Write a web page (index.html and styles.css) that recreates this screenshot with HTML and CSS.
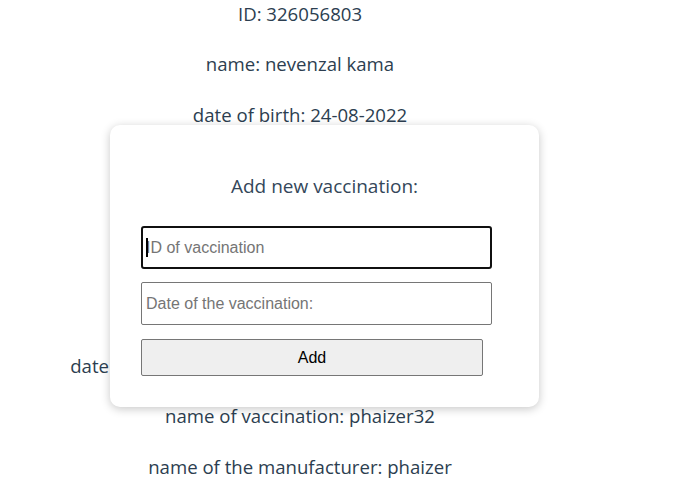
FILE: index.html
```html
<!DOCTYPE html>
<html lang="en">
<head>
<meta charset="utf-8">
<title>Patient</title>
<link rel="stylesheet" href="styles.css">
</head>
<body>
<div class="info">
  <p class="line">ID: 326056803</p>
  <p class="line">name: nevenzal kama</p>
  <p class="line">date of birth: 24-08-2022</p>
  <p class="line">phone: 0523456789</p>
  <p class="line">address: haifa</p>
  <p class="line">positive test: 01-09-2022</p>
  <p class="line">recovery: 15-09-2022</p>
  <p class="line">date of vaccination: 2022-08-24T10:30:00.0000+03:00</p>
  <p class="line">name of vaccination: phaizer32</p>
  <p class="line">name of the manufacturer: phaizer</p>
</div>

<div class="modal">
  <h3 class="modal-title">Add new vaccination:</h3>
  <form class="modal-form">
    <div class="field-wrap">
      <input class="field field-focused" type="text" placeholder="ID of vaccination">
      <span class="caret"></span>
    </div>
    <input class="field" type="text" placeholder="Date of the vaccination:">
    <button class="add-btn" type="button">Add</button>
  </form>
</div>
</body>
</html>
```

FILE: styles.css
```css
html, body {
  margin: 0;
  padding: 0;
  background: #ffffff;
}

body {
  font-family: "Open Sans", "Noto Sans", sans-serif;
  color: #2c3e50;
}

.info {
  width: 600px;
  display: flex;
  flex-direction: column;
  align-items: center;
  gap: 26.3px;
  padding-top: 2px;
  text-align: center;
}

.line {
  margin: 0;
  font-size: 18.6px;
  line-height: 24px;
  white-space: nowrap;
}

.modal {
  position: absolute;
  left: 110px;
  top: 125px;
  width: 429px;
  height: 282px;
  box-sizing: border-box;
  padding: 49px 31px 31px 31px;
  background: #ffffff;
  border-radius: 10px;
  box-shadow: 0 2px 10px rgba(0, 0, 0, 0.22);
  display: flex;
  flex-direction: column;
}

.modal-title {
  margin: 0 0 28px 0;
  font-size: 19px;
  font-weight: 400;
  line-height: 24px;
  text-align: center;
  color: #34475a;
}

.modal-form {
  display: flex;
  flex-direction: column;
  align-items: flex-start;
  gap: 13px;
}

.field-wrap {
  position: relative;
  display: flex;
}

.caret {
  position: absolute;
  left: 5px;
  top: 12px;
  width: 2px;
  height: 19px;
  background: #000;
}

.field {
  box-sizing: border-box;
  width: 351px;
  height: 43px;
  margin: 0;
  padding: 0 4px;
  font-family: "Liberation Sans", Arial, sans-serif;
  font-size: 16px;
  color: #000;
  background: #fff;
  border: 1px solid #767676;
  border-radius: 2px;
  outline: none;
}

.field::placeholder {
  color: #757575;
}

.field-focused {
  border: 2px solid #101010;
  border-radius: 3px;
  padding: 0 3px;
}

.add-btn {
  box-sizing: border-box;
  width: 342px;
  height: 37px;
  margin: 1px 0 0 0;
  padding: 0;
  font-family: "Liberation Sans", Arial, sans-serif;
  font-size: 16px;
  color: #000;
  background: #efefef;
  border: 1px solid #767676;
  border-radius: 2px;
}
```
